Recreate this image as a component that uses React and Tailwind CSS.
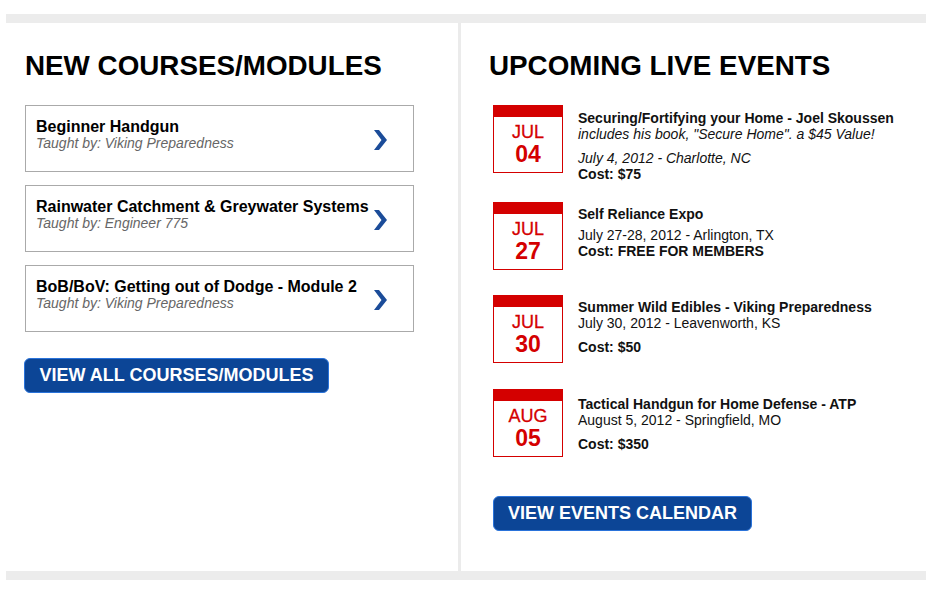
const COURSES = [
  { title: 'Beginner Handgun', by: 'Viking Preparedness' },
  { title: 'Rainwater Catchment & Greywater Systems', by: 'Engineer 775' },
  { title: 'BoB/BoV: Getting out of Dodge - Module 2', by: 'Viking Preparedness' },
]

function Chevron() {
  return (
    <svg width="13" height="20" viewBox="0 0 13 20" className="shrink-0">
      <polygon points="0,0 5,0 13,10 5,20 0,20 7.5,10" fill="#1b4c99" />
    </svg>
  )
}

function CalBox({ month, day }) {
  return (
    <div className="w-[70px] h-[68px] shrink-0 border border-[#d40000] flex flex-col">
      <div className="h-[11px] bg-[#d40000]" />
      <div className="flex-1 flex flex-col items-center justify-center text-[#d40000]">
        <div className="text-[18px] leading-[19px] [-webkit-text-stroke:0.3px_#d40000]">{month}</div>
        <div className="text-[23px] leading-[24px] font-bold">{day}</div>
      </div>
    </div>
  )
}

export default function App() {
  return (
    <div className="min-h-screen bg-white pt-[14px] pl-[6px] font-['Liberation_Sans',Arial,sans-serif] text-[#111]">
      <div className="w-[920px] border-t-[9px] border-b-[9px] border-[#ececec]">
        <div className="flex h-[548px]">
          {/* courses */}
          <div className="w-[452px] pl-[19px] pt-[29px]">
            <h2 className="text-[27.8px] leading-[28px] font-bold text-black">NEW COURSES/MODULES</h2>

            <div className="mt-[25px] flex flex-col gap-[13px]">
              {COURSES.map((c) => (
                <div
                  key={c.title}
                  className="w-[389px] h-[67px] border border-[#aaaaaa] pl-[10px] pr-[26px] pt-3 flex items-start"
                >
                  <div className="flex-1">
                    <div className="text-[16px] leading-[17px] font-bold text-black">{c.title}</div>
                    <div className="text-[14px] leading-[16px] italic text-[#666]">Taught by: {c.by}</div>
                  </div>
                  <div className="self-center -mt-[9px]">
                    <Chevron />
                  </div>
                </div>
              ))}
            </div>

            <button className="mt-[26px] -ml-px w-[305px] h-[35px] rounded-[6px] bg-[#0c4596] border border-[#2a73da] text-white font-bold text-[18px]">
              VIEW ALL COURSES/MODULES
            </button>
          </div>

          <div className="w-[3px] bg-[#ebebeb]" />

          {/* events */}
          <div className="flex-1 pl-[32px] pt-[29px]">
            <h2 className="-ml-[4px] text-[27.8px] leading-[28px] font-bold text-black">UPCOMING LIVE EVENTS</h2>

            <div className="mt-[25px] text-[14px] leading-[16px]">
              <div className="flex gap-[15px] mb-[20px]">
                <CalBox month="JUL" day="04" />
                <div className="pt-[5px]">
                  <div className="font-bold">Securing/Fortifying your Home - Joel Skoussen</div>
                  <div className="italic">includes his book, "Secure Home". a $45 Value!</div>
                  <div className="italic mt-2">July 4, 2012 - Charlotte, NC</div>
                  <div className="font-bold">Cost: $75</div>
                </div>
              </div>

              <div className="flex gap-[15px] mb-[25px]">
                <CalBox month="JUL" day="27" />
                <div className="pt-[4px]">
                  <div className="font-bold">Self Reliance Expo</div>
                  <div className="mt-[5px]">July 27-28, 2012 - Arlington, TX</div>
                  <div className="font-bold">Cost: FREE FOR MEMBERS</div>
                </div>
              </div>

              <div className="flex gap-[15px] mb-[26px]">
                <CalBox month="JUL" day="30" />
                <div className="pt-[4px]">
                  <div className="font-bold">Summer Wild Edibles - Viking Preparedness</div>
                  <div>July 30, 2012 - Leavenworth, KS</div>
                  <div className="font-bold mt-2">Cost: $50</div>
                </div>
              </div>

              <div className="flex gap-[15px] mb-[39px]">
                <CalBox month="AUG" day="05" />
                <div className="pt-[7px]">
                  <div className="font-bold">Tactical Handgun for Home Defense - ATP</div>
                  <div>August 5, 2012 - Springfield, MO</div>
                  <div className="font-bold mt-2">Cost: $350</div>
                </div>
              </div>
            </div>

            <button className="w-[259px] h-[35px] rounded-[6px] bg-[#0c4596] border border-[#2a73da] text-white font-bold text-[18px]">
              VIEW EVENTS CALENDAR
            </button>
          </div>
        </div>
      </div>
    </div>
  )
}
